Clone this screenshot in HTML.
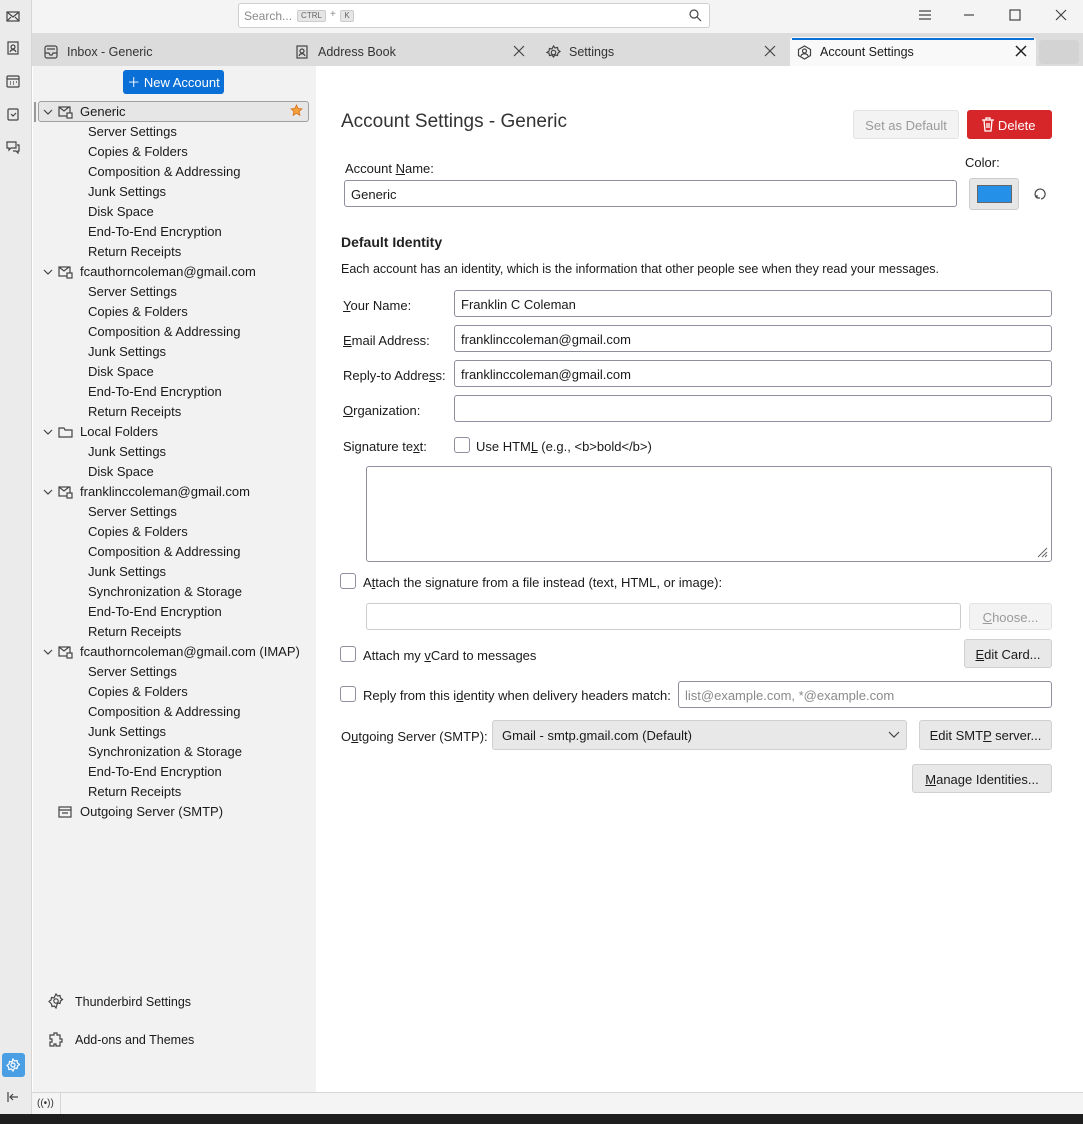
<!DOCTYPE html>
<html><head><meta charset="utf-8"><style>
*{box-sizing:border-box;margin:0;padding:0}
body{width:1083px;height:1124px;position:relative;overflow:hidden;font-family:"Liberation Sans",sans-serif;font-size:13px;color:#1a1a1a;background:#fff}
.a{position:absolute}
.rail{left:0;top:0;width:32px;height:1114px;background:#ebebeb;border-right:1px solid #d6d6d6}
.top{left:32px;top:0;width:1051px;height:34px;background:#f4f4f4;border-bottom:1px solid #ddd}
.tabs{left:32px;top:34px;width:1051px;height:32px;background:#dcdcdc}
.tab{position:absolute;top:3px;height:29px;line-height:31px;font-size:12.5px;color:#333}
.side{left:33px;top:66px;width:283px;height:1026px;background:#f2f2f2}
.ti{position:absolute;left:88px;font-size:13px;line-height:22px;color:#1a1a1a}
.tp{position:absolute;left:80px;font-size:13px;line-height:22px}
.inp{position:absolute;background:#fff;border:1px solid #8f8f9d;border-radius:3px;height:27px;line-height:27px;padding-left:6px;font-size:13px}
.lbl{position:absolute;font-size:13px;line-height:18px}
.cb{position:absolute;width:16px;height:16px;border:1px solid #8f8f9d;border-radius:3px;background:#fff}
.btn{position:absolute;background:#e8e8e8;border:1px solid #d0d0d0;border-radius:3px;text-align:center;font-size:13px;color:#1a1a1a}
.ic{position:absolute;stroke:#444;fill:none;stroke-width:1.2}
.chev{position:absolute;left:43px;width:10px;height:10px}
</style></head><body>
<div class="a rail"></div>
<svg class="ic" style="left:6px;top:9px" width="14" height="14"><rect x="1" y="3" width="12" height="9"/><path d="M1 3l6 5 6-5M1 12l4-4M13 12l-4-4"/></svg>
<svg class="ic" style="left:6px;top:41px" width="14" height="14"><rect x="2" y="1" width="10" height="12"/><circle cx="7" cy="6" r="2"/><path d="M4 11c1-3 5-3 6 0"/></svg>
<svg class="ic" style="left:6px;top:74px" width="14" height="14"><rect x="1" y="2" width="12" height="11" rx="1"/><path d="M1 5h12M4 8h1M7 8h1M10 8h1M4 10h1M7 10h1"/></svg>
<svg class="ic" style="left:6px;top:107px" width="14" height="14"><rect x="2" y="2" width="10" height="11" rx="1"/><path d="M5 7l2 2 3-3"/></svg>
<svg class="ic" style="left:6px;top:140px" width="14" height="14"><path d="M1 2h9v6H5l-2 2V8H1z M11 5h2v6h-1v2l-2-2H7"/></svg>
<div class="a" style="left:2px;top:1053px;width:23px;height:24px;background:#4a9ee3;border-radius:3px"></div>
<svg class="a" style="left:6px;top:1058px" width="14" height="14" fill="none" stroke="#fff" stroke-width="1.2"><circle cx="7" cy="7" r="2"/><path d="M7 1l1.5 2 2.5-.5.5 2.5 2 1.5-2 1.5-.5 2.5-2.5-.5L7 13l-1.5-2-2.5.5-.5-2.5L1 7.5l2-1.5.5-2.5 2.5.5z"/></svg>
<svg class="ic" style="left:6px;top:1090px" width="14" height="14"><path d="M2 2v10M12 7H4M7 4L4 7l3 3"/></svg>

<div class="a top"></div>
<div class="a" style="left:238px;top:3px;width:472px;height:25px;background:#fff;border:1px solid #cfcfcf;border-radius:3px"></div>
<div class="a" style="left:244px;top:9px;font-size:12px;color:#8a8a8a">Search...</div>
<div class="a" style="left:297px;top:10px;width:29px;height:12px;background:#e6e6e6;border:1px solid #ccc;border-radius:2px;font-size:8px;line-height:10px;text-align:center;color:#666">CTRL</div>
<div class="a" style="left:330px;top:9px;font-size:10px;color:#888">+</div>
<div class="a" style="left:340px;top:10px;width:14px;height:12px;background:#e6e6e6;border:1px solid #ccc;border-radius:2px;font-size:8px;line-height:10px;text-align:center;color:#666">K</div>
<svg class="ic" style="left:688px;top:8px" width="14" height="14"><circle cx="6" cy="6" r="4"/><path d="M9 9l4 4"/></svg>
<svg class="ic" style="left:918px;top:8px" width="14" height="14"><path d="M1 3h12M1 7h12M1 11h12"/></svg>
<svg class="ic" style="left:962px;top:8px" width="14" height="14"><path d="M2 7h10"/></svg>
<svg class="ic" style="left:1008px;top:8px" width="14" height="14"><rect x="2" y="2" width="10" height="10"/></svg>
<svg class="ic" style="left:1054px;top:8px" width="14" height="14"><path d="M2 2l10 10M12 2L2 12"/></svg>

<div class="a tabs"></div>
<div class="tab" style="left:44px;top:37px"><svg class="ic" style="left:0;top:8px" width="14" height="14"><rect x="1" y="1" width="12" height="12" rx="2"/><path d="M1 8h4l1 2h2l1-2h4M3 4h8"/></svg><span style="position:absolute;left:23px;white-space:nowrap">Inbox - Generic</span></div>
<div class="tab" style="left:295px;top:37px"><svg class="ic" style="left:0;top:8px" width="14" height="14"><rect x="2" y="1" width="10" height="12"/><circle cx="7" cy="6" r="2"/><path d="M4 11c1-3 5-3 6 0"/></svg><span style="position:absolute;left:23px;white-space:nowrap">Address Book</span></div>
<svg class="ic" style="left:513px;top:45px" width="12" height="12"><path d="M1 1l10 10M11 1L1 11"/></svg>
<div class="tab" style="left:546px;top:37px"><svg class="ic" style="left:0;top:8px" width="15" height="15"><circle cx="7.5" cy="7.5" r="2.2"/><path d="M7.5 1l1.5 2 2.5-.5.5 2.5 2 1.5-2 1.5-.5 2.5-2.5-.5-1.5 2-1.5-2-2.5.5-.5-2.5L1 7.5l2-1.5.5-2.5 2.5.5z"/></svg><span style="position:absolute;left:23px;white-space:nowrap">Settings</span></div>
<svg class="ic" style="left:764px;top:45px" width="12" height="12"><path d="M1 1l10 10M11 1L1 11"/></svg>
<div class="a" style="left:790px;top:37px;width:246px;height:29px;background:#f9f9f9;border-radius:4px 4px 0 0"></div>
<div class="a" style="left:792px;top:38px;width:242px;height:2px;background:#0a6fd6"></div>
<div class="tab" style="left:797px;top:37px;color:#1a1a1a"><svg class="ic" style="left:0;top:8px" width="15" height="15"><path d="M7.5 1l6 3.5v6l-6 3.5-6-3.5v-6z"/><circle cx="7.5" cy="6" r="2"/><path d="M4 11c1-3 6-3 7 0"/></svg><span style="position:absolute;left:23px;white-space:nowrap">Account Settings</span></div>
<svg class="a" style="left:1015px;top:45px" width="12" height="12" stroke="#222" stroke-width="1.5"><path d="M1 1l10 10M11 1L1 11"/></svg>
<div class="a" style="left:1039px;top:40px;width:40px;height:24px;background:#d3d3d3;border-radius:4px"></div>

<div class="a side"></div>
<div class="a" style="left:123px;top:70px;width:101px;height:24px;background:#0a6fd6;border-radius:3px;color:#fff;font-size:13px;line-height:25px;text-align:center">＋ New Account</div>
<div class="a" style="left:34px;top:102px;width:2px;height:20px;border-left:1px solid #999;border-right:1px solid #999"></div>
<div class="a" style="left:38px;top:101px;width:271px;height:21px;background:#e6e6e6;border:1px solid #a0a0a0;border-radius:3px"></div>
<svg class="a" style="left:290px;top:104px" width="13" height="13"><path d="M6.5 1l1.6 3.5 3.8.4-2.9 2.6.9 3.8-3.4-2-3.4 2 .9-3.8L1.1 4.9l3.8-.4z" fill="#f5a13a" stroke="#d86a10" stroke-width="0.8"/></svg>

<svg class="ic chev" style="top:107px" viewBox="0 0 10 10"><path d="M1 3l4 4 4-4"/></svg>
<svg class="ic chev" style="top:267px" viewBox="0 0 10 10"><path d="M1 3l4 4 4-4"/></svg>
<svg class="ic chev" style="top:427px" viewBox="0 0 10 10"><path d="M1 3l4 4 4-4"/></svg>
<svg class="ic chev" style="top:487px" viewBox="0 0 10 10"><path d="M1 3l4 4 4-4"/></svg>
<svg class="ic chev" style="top:647px" viewBox="0 0 10 10"><path d="M1 3l4 4 4-4"/></svg>
<div class="tp" style="top:101px">Generic</div>
<div class="ti" style="top:121px">Server Settings</div>
<div class="ti" style="top:141px">Copies &amp; Folders</div>
<div class="ti" style="top:161px">Composition &amp; Addressing</div>
<div class="ti" style="top:181px">Junk Settings</div>
<div class="ti" style="top:201px">Disk Space</div>
<div class="ti" style="top:221px">End-To-End Encryption</div>
<div class="ti" style="top:241px">Return Receipts</div>
<div class="tp" style="top:261px">fcauthorncoleman@gmail.com</div>
<div class="ti" style="top:281px">Server Settings</div>
<div class="ti" style="top:301px">Copies &amp; Folders</div>
<div class="ti" style="top:321px">Composition &amp; Addressing</div>
<div class="ti" style="top:341px">Junk Settings</div>
<div class="ti" style="top:361px">Disk Space</div>
<div class="ti" style="top:381px">End-To-End Encryption</div>
<div class="ti" style="top:401px">Return Receipts</div>
<div class="tp" style="top:421px">Local Folders</div>
<div class="ti" style="top:441px">Junk Settings</div>
<div class="ti" style="top:461px">Disk Space</div>
<div class="tp" style="top:481px">franklinccoleman@gmail.com</div>
<div class="ti" style="top:501px">Server Settings</div>
<div class="ti" style="top:521px">Copies &amp; Folders</div>
<div class="ti" style="top:541px">Composition &amp; Addressing</div>
<div class="ti" style="top:561px">Junk Settings</div>
<div class="ti" style="top:581px">Synchronization &amp; Storage</div>
<div class="ti" style="top:601px">End-To-End Encryption</div>
<div class="ti" style="top:621px">Return Receipts</div>
<div class="tp" style="top:641px">fcauthorncoleman@gmail.com (IMAP)</div>
<div class="ti" style="top:661px">Server Settings</div>
<div class="ti" style="top:681px">Copies &amp; Folders</div>
<div class="ti" style="top:701px">Composition &amp; Addressing</div>
<div class="ti" style="top:721px">Junk Settings</div>
<div class="ti" style="top:741px">Synchronization &amp; Storage</div>
<div class="ti" style="top:761px">End-To-End Encryption</div>
<div class="ti" style="top:781px">Return Receipts</div>
<div class="tp" style="top:801px">Outgoing Server (SMTP)</div>
<svg class="ic" style="left:58px;top:105px" width="16" height="14"><rect x="1" y="2" width="11" height="9"/><path d="M1 2l5 4 5-4"/><rect x="9" y="8" width="5" height="5" fill="#f2f2f2"/></svg>
<svg class="ic" style="left:58px;top:265px" width="16" height="14"><rect x="1" y="2" width="11" height="9"/><path d="M1 2l5 4 5-4"/><rect x="9" y="8" width="5" height="5" fill="#f2f2f2"/></svg>
<svg class="ic" style="left:58px;top:425px" width="16" height="14"><path d="M1 3h5l1 2h7v7H1z"/></svg>
<svg class="ic" style="left:58px;top:485px" width="16" height="14"><rect x="1" y="2" width="11" height="9"/><path d="M1 2l5 4 5-4"/><rect x="9" y="8" width="5" height="5" fill="#f2f2f2"/></svg>
<svg class="ic" style="left:58px;top:645px" width="16" height="14"><rect x="1" y="2" width="11" height="9"/><path d="M1 2l5 4 5-4"/><rect x="9" y="8" width="5" height="5" fill="#f2f2f2"/></svg>
<svg class="ic" style="left:58px;top:805px" width="16" height="14"><rect x="1" y="2" width="12" height="10"/><path d="M1 5h12M4 8h6"/></svg>

<svg class="ic" style="left:48px;top:993px" width="16" height="16"><circle cx="8" cy="8" r="2.2"/><path d="M8 1l1.5 2 2.5-.5.5 2.5 2 1.5-2 1.5-.5 2.5-2.5-.5L8 15l-1.5-2-2.5.5-.5-2.5L1 8.5l2-1.5.5-2.5 2.5.5z"/></svg>
<div class="a" style="left:75px;top:995px;font-size:12.5px">Thunderbird Settings</div>
<svg class="ic" style="left:48px;top:1031px" width="16" height="16"><path d="M2 4h4V2h3v2h3v4h2v3h-2v4H8v-2H6v2H2v-4h2V8H2z"/></svg>
<div class="a" style="left:75px;top:1033px;font-size:12.5px">Add-ons and Themes</div>

<div class="a" style="left:32px;top:1092px;width:1051px;height:22px;background:#f4f4f4;border-top:1px solid #d6d6d6"></div>
<div class="a" style="left:60px;top:1093px;width:1px;height:21px;background:#d6d6d6"></div>
<div class="a" style="left:37px;top:1098px;font-size:10px;color:#333">((•))</div>
<div class="a" style="left:0;top:1114px;width:1083px;height:10px;background:#1e1e1e"></div>

<!-- main -->
<div class="a" style="left:341px;top:111px;font-size:19px;color:#333">Account Settings - Generic</div>
<div class="btn" style="left:853px;top:110px;width:106px;height:29px;line-height:29px;background:#f3f3f3;border-color:#e2e2e2;color:#9a9a9a">Set as Default</div>
<div class="btn" style="left:967px;top:110px;width:85px;height:29px;line-height:29px;background:#d7262a;border-color:#d7262a;color:#fff">&nbsp;&nbsp;&nbsp;&nbsp;Delete</div>
<svg class="a" style="left:981px;top:117px" width="14" height="15" fill="none" stroke="#fff" stroke-width="1.3"><path d="M1 3h12M5 3V1h4v2M3 3l1 11h6l1-11M6 6v5M8 6v5"/></svg>
<div class="lbl" style="left:345px;top:160px">Account <u>N</u>ame:</div>
<div class="lbl" style="left:965px;top:154px">Color:</div>
<div class="inp" style="left:344px;top:180px;width:613px">Generic</div>
<div class="a" style="left:969px;top:178px;width:50px;height:32px;background:#e6e6e6;border:1px solid #ccc;border-radius:3px"></div>
<div class="a" style="left:977px;top:185px;width:35px;height:18px;background:#2490e8;border:1px solid #666"></div>
<svg class="ic" style="left:1034px;top:187px" width="14" height="14"><path d="M3 11A5 5 0 1 1 7 12M3 11l0-3M3 11l3 0"/></svg>
<div class="a" style="left:341px;top:234px;font-size:14px;font-weight:bold;color:#222">Default Identity</div>
<div class="lbl" style="left:341px;top:260px;font-size:12.5px">Each account has an identity, which is the information that other people see when they read your messages.</div>
<div class="lbl" style="left:343px;top:297px"><u>Y</u>our Name:</div>
<div class="inp" style="left:454px;top:290px;width:598px">Franklin C Coleman</div>
<div class="lbl" style="left:343px;top:332px"><u>E</u>mail Address:</div>
<div class="inp" style="left:454px;top:325px;width:598px">franklinccoleman@gmail.com</div>
<div class="lbl" style="left:343px;top:367px">Reply-to Addre<u>s</u>s:</div>
<div class="inp" style="left:454px;top:360px;width:598px">franklinccoleman@gmail.com</div>
<div class="lbl" style="left:343px;top:402px"><u>O</u>rganization:</div>
<div class="inp" style="left:454px;top:395px;width:598px"></div>
<div class="lbl" style="left:343px;top:438px">Signature te<u>x</u>t:</div>
<div class="cb" style="left:454px;top:437px"></div>
<div class="lbl" style="left:476px;top:438px">Use HTM<u>L</u> (e.g., &lt;b&gt;bold&lt;/b&gt;)</div>
<div class="inp" style="left:366px;top:466px;width:686px;height:96px"></div>
<svg class="a" style="left:1036px;top:546px" width="12" height="12" stroke="#666"><path d="M11 2L2 11M11 6L6 11M11 9l-2 2"/></svg>
<div class="cb" style="left:340px;top:573px"></div>
<div class="lbl" style="left:363px;top:574px">A<u>t</u>tach the signature from a file instead (text, HTML, or image):</div>
<div class="inp" style="left:366px;top:603px;width:595px;border-color:#ccc"></div>
<div class="btn" style="left:969px;top:603px;width:83px;height:27px;line-height:27px;background:#f3f3f3;border-color:#e2e2e2;color:#9a9a9a"><u>C</u>hoose...</div>
<div class="cb" style="left:340px;top:646px"></div>
<div class="lbl" style="left:363px;top:647px">Attach my <u>v</u>Card to messages</div>
<div class="btn" style="left:964px;top:639px;width:88px;height:29px;line-height:29px"><u>E</u>dit Card...</div>
<div class="cb" style="left:340px;top:686px"></div>
<div class="lbl" style="left:363px;top:687px">Reply from this i<u>d</u>entity when delivery headers match:</div>
<div class="inp" style="left:678px;top:681px;width:374px;color:#8a8a8a">list@example.com, *@example.com</div>
<div class="lbl" style="left:341px;top:728px">O<u>u</u>tgoing Server (SMTP):</div>
<div class="btn" style="left:492px;top:720px;width:415px;height:30px;line-height:30px;text-align:left;padding-left:9px">Gmail - smtp.gmail.com (Default)</div>
<svg class="ic" style="left:888px;top:730px" width="12" height="10"><path d="M1 2l5 5 5-5"/></svg>
<div class="btn" style="left:919px;top:720px;width:133px;height:30px;line-height:30px">Edit SMT<u>P</u> server...</div>
<div class="btn" style="left:912px;top:764px;width:140px;height:29px;line-height:29px"><u>M</u>anage Identities...</div>
</body></html>
